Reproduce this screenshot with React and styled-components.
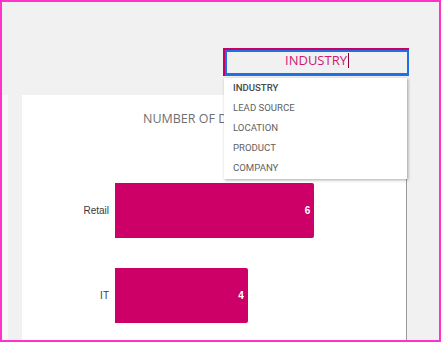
import React from 'react';
import styled, { createGlobalStyle } from 'styled-components';

const GlobalStyle = createGlobalStyle`
  html, body {
    margin: 0;
    padding: 0;
    background: #ffffff;
  }
  * {
    box-sizing: border-box;
  }
`;

const data = [
  { label: 'Retail', value: 6 },
  { label: 'IT', value: 4 },
];

const options = ['Industry', 'Lead Source', 'Location', 'Product', 'Company'];

const UNIT = 33.2;

const App = () => {
  return (
    <Frame>
      <GlobalStyle />
      <TopBar>
        <FilterBox>
          <FilterInput>
            INDUSTRY<Caret />
          </FilterInput>
          <Menu>
            {options.map((opt, i) => (
              <MenuItem key={opt} $active={i === 0}>{opt}</MenuItem>
            ))}
          </Menu>
        </FilterBox>
      </TopBar>
      <Body>
        <Strip />
        <Card>
          <Title>NUMBER OF DEALS BY INDUSTRY</Title>
          <Chart>
            {data.map((row) => (
              <Row key={row.label}>
                <Label>{row.label}</Label>
                <Bar style={{ width: row.value * UNIT }}>
                  <Value>{row.value}</Value>
                </Bar>
              </Row>
            ))}
          </Chart>
        </Card>
      </Body>
    </Frame>
  );
};

export default App;

const Frame = styled.div`
  width: 441px;
  height: 342px;
  border: 2px solid #ff33cc;
  background: #f1f1f1;
  display: flex;
  flex-direction: column;
  overflow: hidden;
`;

const TopBar = styled.div`
  height: 93px;
  flex: none;
  display: flex;
  justify-content: flex-end;
  align-items: flex-start;
  padding: 46px 30px 0 0;
`;

const FilterBox = styled.div`
  position: relative;
  width: 186px;
  height: 28px;
  border-top: 2px solid #c8005f;
  border-left: 2px solid #c8005f;
`;

const FilterInput = styled.div`
  height: 100%;
  border: 2px solid #1f6fe5;
  border-bottom-width: 3px;
  display: flex;
  justify-content: center;
  align-items: center;
  padding-bottom: 5px;
  font-family: "Open Sans", "Noto Sans", sans-serif;
  font-size: 13px;
  color: #cc1a72;
  line-height: 16px;
`;

const Caret = styled.span`
  display: inline-block;
  width: 1px;
  height: 15px;
  margin-left: 1px;
  background: #8a0033;
`;

const Menu = styled.div`
  position: absolute;
  z-index: 10;
  top: 28px;
  left: -1px;
  width: 183px;
  background: #ffffff;
  box-shadow: 1px 1px 3px rgba(0, 0, 0, 0.35);
  padding-bottom: 1px;
`;

const MenuItem = styled.div`
  height: 20px;
  line-height: 20px;
  padding-left: 9px;
  font-family: Roboto, "Liberation Sans", sans-serif;
  font-size: 9.6px;
  text-transform: uppercase;
  color: ${(p) => (p.$active ? '#4a4a4a' : '#626262')};
  font-weight: ${(p) => (p.$active ? 500 : 400)};
`;

const Body = styled.div`
  flex: 1;
  min-height: 0;
  display: flex;
`;

const Strip = styled.div`
  width: 6px;
  background: #f8f8f8;
  margin-right: 14px;
`;

const Card = styled.div`
  width: 385px;
  background: #ffffff;
  border-right: 1px solid #9a9a9a;
  display: flex;
  flex-direction: column;
`;

const Title = styled.div`
  margin-top: 16px;
  padding-left: 121px;
  font-family: "Open Sans", "Noto Sans", sans-serif;
  font-size: 12.5px;
  line-height: 16px;
  color: #6f6f6f;
  white-space: nowrap;
`;

const Chart = styled.div`
  margin-top: 56px;
  display: flex;
  flex-direction: column;
  gap: 30px;
`;

const Row = styled.div`
  display: grid;
  grid-template-columns: 87px 1fr;
  column-gap: 6px;
  align-items: center;
  height: 55px;
`;

const Label = styled.div`
  text-align: right;
  font-family: "Liberation Sans", Arial, sans-serif;
  font-size: 10px;
  color: #3a3a3a;
`;

const Bar = styled.div`
  height: 55px;
  background: #cc0066;
  border-radius: 0 2px 2px 0;
  display: flex;
  justify-content: flex-end;
  align-items: center;
  padding-right: 4px;
`;

const Value = styled.span`
  font-family: "Liberation Sans", Arial, sans-serif;
  font-size: 10px;
  font-weight: 700;
  color: #ffffff;
`;
